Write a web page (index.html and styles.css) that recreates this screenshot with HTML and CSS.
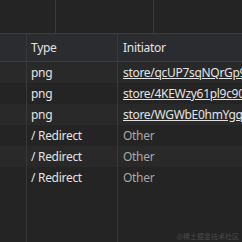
FILE: index.html
```html
<!DOCTYPE html>
<html>
<head>
<meta charset="utf-8">
<link rel="stylesheet" href="styles.css">
</head>
<body>
<div class="page">
  <div class="toolbar">
    <div class="tcell tcell-a"></div>
    <div class="tcell tcell-b"></div>
    <div class="tcell tcell-c"></div>
  </div>
  <div class="table">
    <div class="row head">
      <div class="cell c0"></div>
      <div class="cell c1">Type</div>
      <div class="cell c2">Initiator</div>
    </div>
    <div class="row alt">
      <div class="cell c0"></div>
      <div class="cell c1">png</div>
      <div class="cell c2"><span class="link">store/qcUP7sqNQrGp9c90Hs2kLm</span></div>
    </div>
    <div class="row">
      <div class="cell c0"></div>
      <div class="cell c1">png</div>
      <div class="cell c2"><span class="link">store/4KEWzy61pl9c90aQ2dT</span></div>
    </div>
    <div class="row alt">
      <div class="cell c0"></div>
      <div class="cell c1">png</div>
      <div class="cell c2"><span class="link">store/WGWbE0hmYgqJ3k</span></div>
    </div>
    <div class="row">
      <div class="cell c0"></div>
      <div class="cell c1">/ Redirect</div>
      <div class="cell c2 muted">Other</div>
    </div>
    <div class="row alt">
      <div class="cell c0"></div>
      <div class="cell c1">/ Redirect</div>
      <div class="cell c2 muted">Other</div>
    </div>
    <div class="row">
      <div class="cell c0"></div>
      <div class="cell c1">/ Redirect</div>
      <div class="cell c2 muted">Other</div>
    </div>
    <div class="row filler">
      <div class="cell c0"></div>
      <div class="cell c1"></div>
      <div class="cell c2"></div>
    </div>
  </div>
  <div class="watermark">@稀土掘金技术社区</div>
</div>
</body>
</html>
```
FILE: styles.css
```css
html, body {
  margin: 0;
  padding: 0;
  background: #242424;
}
.page {
  width: 242px;
  height: 242px;
  overflow: hidden;
  position: relative;
  font-family: "Noto Sans", "Open Sans", sans-serif;
  font-size: 12px;
  letter-spacing: -0.3px;
  color: #e3e3e3;
  display: flex;
  flex-direction: column;
}
.toolbar {
  display: flex;
  height: 33px;
  border-bottom: 1px solid #3c3c3c;
  flex: none;
}
.tcell {
  height: 100%;
  border-right: 1px solid #3a3a3a;
  flex: none;
}
.tcell-a { width: 55px; }
.tcell-b { width: 97px; }
.tcell-c { flex: 1; border-right: none; }
.table {
  display: flex;
  flex-direction: column;
  flex: 1;
}
.row {
  display: grid;
  grid-template-columns: 27px 91px 1fr;
  height: 21px;
  align-items: stretch;
  flex: none;
}
.row.head {
  height: 27px;
  background: #2b2c2f;
  border-bottom: 1px solid #3c3c3c;
}
.row.alt {
  background: #292929;
}
.row.filler {
  flex: 1;
  height: auto;
}
.cell {
  border-right: 1px solid #383838;
  padding-left: 4px;
  white-space: nowrap;
  overflow: hidden;
  line-height: 21px;
}
.row.head .cell {
  line-height: 27px;
}
.c2 {
  border-right: none;
  padding-left: 5px;
}
.link {
  text-decoration: underline;
  color: #e3e3e3;
}
.muted {
  color: #a8a8a8;
}
.watermark {
  position: absolute;
  right: 3px;
  bottom: 1px;
  font-family: "Noto Sans CJK SC", sans-serif;
  font-size: 7px;
  letter-spacing: 0;
  color: #4a4a4a;
  line-height: 9px;
}
```
